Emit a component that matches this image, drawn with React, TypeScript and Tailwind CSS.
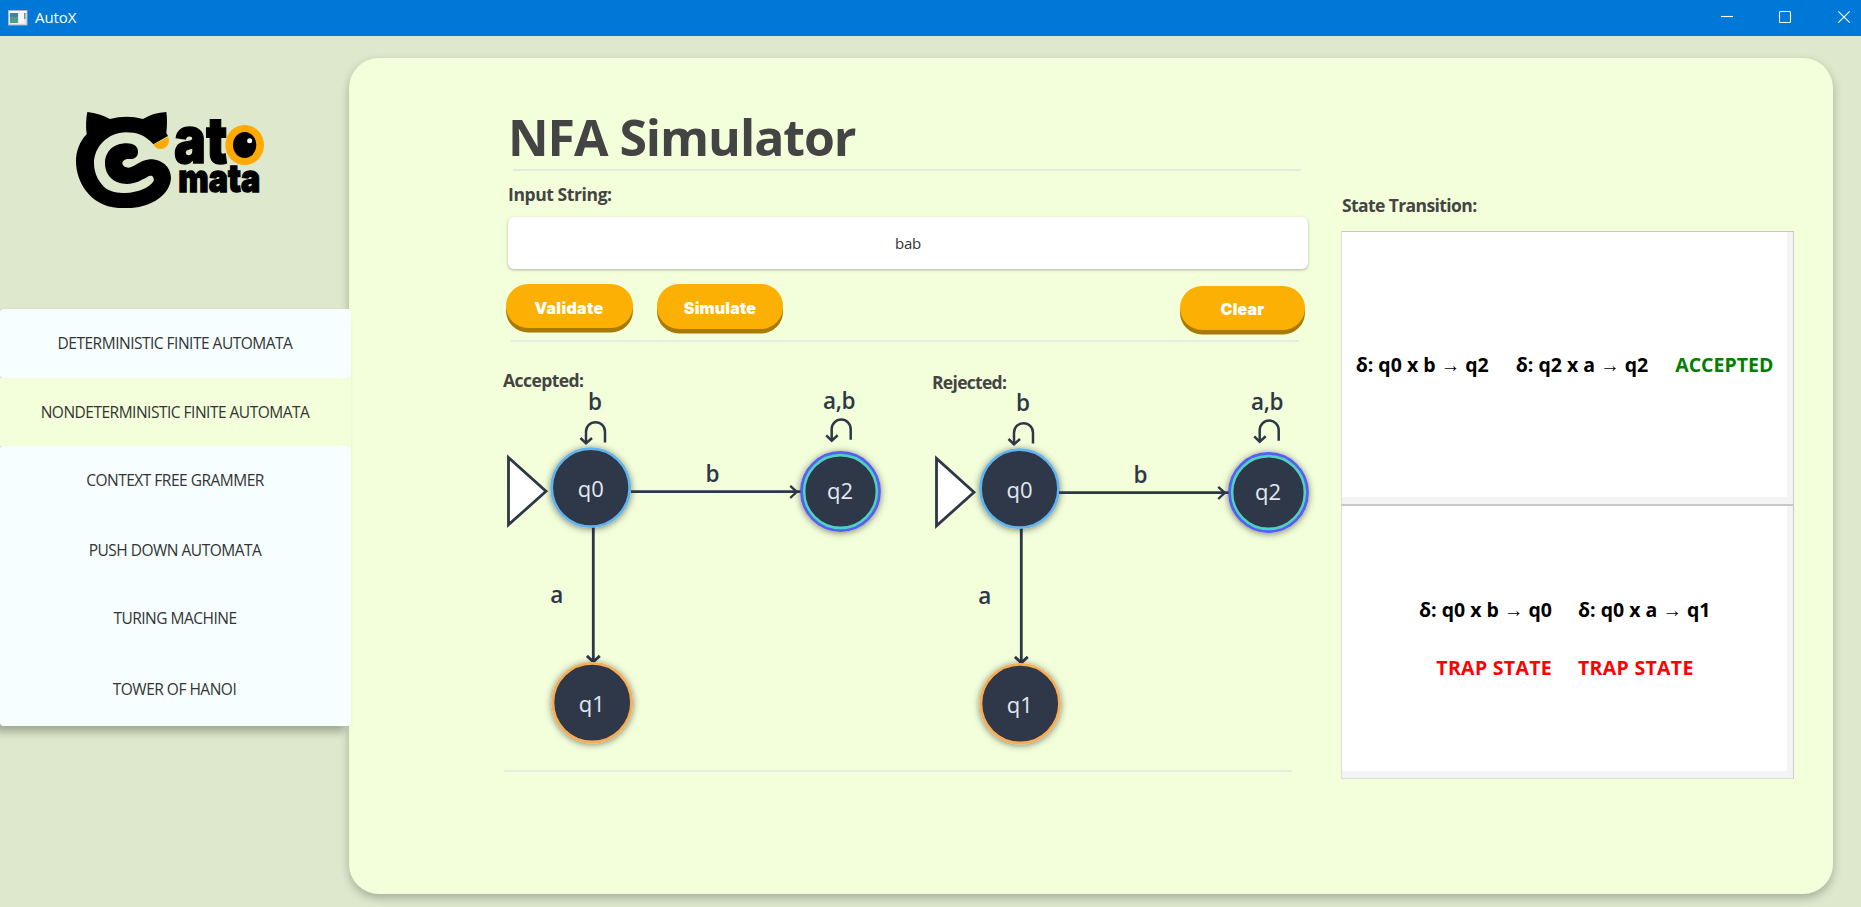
import type { ReactNode } from "react";

const INK = "#2d3748";

function TitleBar() {
  return (
    <header className="flex h-9 shrink-0 items-center bg-[#0078d7] pl-2 text-white">
      <svg width="20" height="17" viewBox="0 0 20 17">
        <rect x="0.5" y="0.5" width="18.5" height="14.5" fill="#e9eaec" stroke="#a9b6c4" />
        <rect x="1" y="1" width="17.5" height="2" fill="#f7f7f7" />
        <rect x="2" y="3" width="8" height="10" fill="#4f9c8c" />
        <rect x="2" y="3" width="8" height="4" fill="#4580a0" />
        <rect x="11" y="3" width="5" height="10" fill="#f7f8fa" />
        <rect x="16" y="3" width="1.5" height="6" fill="#58a58c" />
      </svg>
      <span className="mb-[2px] ml-[7px] text-[15px] leading-5 tracking-[-0.1px]">AutoX</span>
      <svg className="ml-auto" width="140" height="36" viewBox="0 0 140 36" fill="none" stroke="#fff" strokeWidth="1.1">
        <path d="M0 16.5h12" />
        <rect x="58.5" y="11.5" width="11" height="11" rx="1" />
        <path d="M117.3 11.3l11.4 11.4M128.7 11.3l-11.4 11.4" />
      </svg>
    </header>
  );
}

function Logo() {
  return (
    <svg className="ml-[70px] mt-16 shrink-0 overflow-visible" width="210" height="120" viewBox="0 0 630 360">
      <path d="M52 36Q90 40 120 57Q170 44 219 57Q250 38 289 36Q293 62 289 99L294 108L250 133C225 105 200 97 168 97C115 97 72 140 72 190C72 225 90 250 105 263C120 275 145 279 165 279C205 278 240 262 251 243C254 230 243 223 232 231C215 240 195 252 171 252C130 252 105 225 105 190C105 155 130 130 170 130C190 130 204 138 204 155C204 170 195 177 180 177C165 176 157 182 157 190C158 200 168 203 175 203C195 202 205 182 240 178C275 178 303 200 303 235C300 285 245 320 185 324L145 324C100 320 70 300 50 275C30 250 18 215 18 185C18 155 28 125 50 103C47 80 48 55 52 36Z" />
      <path d="M250 134L294 111C300 120 298 145 272 147C262 147 256 142 250 134Z" fill="#ffaa00" />
      <g fontFamily="Inter, sans-serif" fontWeight="900" stroke="#000" strokeWidth="4">
        <text x="312" y="190" fontSize="194" textLength="160" lengthAdjust="spacingAndGlyphs">at</text>
        <text x="325" y="276.5" fontSize="117" textLength="246" lengthAdjust="spacingAndGlyphs">mata</text>
      </g>
      <ellipse cx="524" cy="135" rx="58" ry="60" fill="#ffaa00" />
      <ellipse cx="524" cy="135" rx="35" ry="39" />
      <circle cx="539" cy="122" r="7.5" fill="#fff" />
    </svg>
  );
}

function MenuItem({ children, className }: { children: ReactNode; className: string }) {
  return (
    <button className={`flex w-full items-center justify-center text-[15.5px] tracking-[-0.5px] text-[#333] ${className}`}>
      {children}
    </button>
  );
}

function Sidebar() {
  return (
    <aside className="relative z-10 flex w-[349px] shrink-0 flex-col">
      <Logo />
      <nav className="mt-[89px] flex w-[351px] flex-col rounded-[4px] shadow-[-6px_6px_8px_rgba(0,0,0,0.28)]">
        <MenuItem className="h-[69px] rounded-[4px] bg-[#f6feff] pr-px">DETERMINISTIC FINITE AUTOMATA</MenuItem>
        <MenuItem className="h-[68px] bg-[#f3ffdb] pt-[2px] pr-px">NONDETERMINISTIC FINITE AUTOMATA</MenuItem>
        <MenuItem className="h-[69px] rounded-t-[4px] bg-[#f6feff] pr-px">CONTEXT FREE GRAMMER</MenuItem>
        <MenuItem className="h-[69px] bg-[#f6feff] pt-[2px] pr-px">PUSH DOWN AUTOMATA</MenuItem>
        <MenuItem className="h-[69px] bg-[#f6feff] pr-px">TURING MACHINE</MenuItem>
        <MenuItem className="h-[73px] rounded-b-[4px] bg-[#f6feff] pr-[2px]">TOWER OF HANOI</MenuItem>
      </nav>
    </aside>
  );
}

function Label({ children, className }: { children: ReactNode; className: string }) {
  return (
    <h2 className={`text-[17.5px] leading-6 font-bold whitespace-nowrap text-[#444] ${className}`}>{children}</h2>
  );
}

function Pill({ children, className }: { children: ReactNode; className: string }) {
  return (
    <button
      className={`flex items-center justify-center rounded-[22px] bg-[#fbb003] font-['Inter',sans-serif] text-base font-black text-white shadow-[0_4.5px_0_#a87a04] ${className}`}
    >
      {children}
    </button>
  );
}

function Loop({ x, y }: { x: number; y: number }) {
  return (
    <g transform={`translate(${x} ${y})`} fill="none" stroke={INK} strokeWidth="2.5">
      <path d="M19 19.8V9A9.5 9.5 0 0 0 0 9V20.5" />
      <path d="M-5.5 15.3L0 20.7L6 15.3" />
    </g>
  );
}

function Automaton({ q0x }: { q0x: number }) {
  return (
    <svg className="block overflow-visible" width="400" height="365" viewBox="0 0 400 365" textAnchor="middle">
      <defs>
        <filter id="node-shadow" x="-30%" y="-30%" width="160%" height="160%">
          <feDropShadow dx="0" dy="1" stdDeviation="3.8" floodColor="#000" floodOpacity="0.5" />
        </filter>
      </defs>
      <path d="M8.5 67.5V134.8L46 101.3Z" fill="#fff" stroke={INK} strokeWidth="2.8" />
      <path d="M93.3 136V272M86.9 265.9L93.3 271.8L99.8 265.9" fill="none" stroke={INK} strokeWidth="2.8" />
      <g filter="url(#node-shadow)">
        <circle cx={q0x} cy="97.7" r="39" fill={INK} stroke="#63b3ed" strokeWidth="2.8" />
      </g>
      <g filter="url(#node-shadow)">
        <circle cx="92.2" cy="312.6" r="39.3" fill={INK} stroke="#f6ad55" strokeWidth="2.8" />
      </g>
      <g filter="url(#node-shadow)">
        <circle cx="340.5" cy="101.5" r="39" fill={INK} stroke="#5a5cf5" strokeWidth="2.8" />
        <circle cx="340.5" cy="101.5" r="36.4" fill="none" stroke="#4fd1c5" strokeWidth="2.6" />
      </g>
      <path d="M131 101.7H300.5" stroke={INK} strokeWidth="2.7" />
      <path d="M290.2 95.8L296.8 101.8L290.2 108" fill="none" stroke={INK} strokeWidth="2.4" />
      <Loop x={86} y={32.7} />
      <Loop x={331.7} y={30} />
      <g fill={INK} fontSize="22.5" fontWeight="600">
        <text x="95" y="20.3">b</text>
        <text x="339.3" y="19" textLength="32.5">a,b</text>
        <text x="212.5" y="92">b</text>
        <text x="56.7" y="213">a</text>
      </g>
      <g fill="#e2e8f0" fontSize="22" fontWeight="400">
        <text x={q0x} y="107.2">q0</text>
        <text x="340" y="108.8">q2</text>
        <text x="91.8" y="322.4">q1</text>
      </g>
    </svg>
  );
}

function Simulator() {
  return (
    <section className="box-content flex w-[832px] shrink-0 flex-col pt-[49px] pl-[151px]">
      <h1 className="ml-[8px] text-[50px] leading-[60px] font-bold tracking-[-1.05px] text-[#444]">NFA Simulator</h1>
      <div className="mt-[2px] ml-[13px] h-[2px] w-[788px] bg-[#e5eadd]" />
      <Label className="mt-[11px] ml-[8px] tracking-[-0.4px]">Input String:</Label>
      <div className="mt-[11px] ml-2 flex h-[52px] w-[800px] items-center justify-center rounded-[6px] bg-white text-[15px] tracking-[-0.3px] text-[#333] shadow-[0_1px_3px_rgba(0,0,0,0.3)]">
        bab
      </div>
      <div className="mt-[15px] ml-[6px] flex h-14 items-start">
        <Pill className="h-11 w-[127px] pt-1 pr-px tracking-[0.3px]">Validate</Pill>
        <Pill className="ml-6 h-[45px] w-[126px] pt-[3px] tracking-[0.15px]">Simulate</Pill>
        <Pill className="mt-[2px] ml-[397px] h-11 w-[125px] pt-[1px] tracking-[0.15px]">Clear</Pill>
      </div>
      <div className="ml-[11px] h-[2px] w-[788px] bg-[#e8ece0]" />
      <div className="mt-[26px] flex h-[402px]">
        <div className="w-[428px]">
          <Label className="ml-[3px] h-[22px] tracking-[-0.55px]">Accepted:</Label>
          <Automaton q0x={90.7} />
        </div>
        <div className="pt-[2px]">
          <Label className="ml-[4px] h-[21px] tracking-[-0.7px]">Rejected:</Label>
          <Automaton q0x={91.5} />
        </div>
      </div>
      <div className="ml-[4px] h-[2px] w-[788px] bg-[#e8ece0]" />
    </section>
  );
}

function Cell({ children, className }: { children: ReactNode; className: string }) {
  return (
    <div className={`border-t border-r border-l border-[#c8c8c8] border-l-[#dcdcdc] bg-[#f4f4f4] pr-[6px] ${className}`}>
      <div className="flex h-full items-center justify-center bg-white text-[19.5px] font-bold whitespace-nowrap text-black">
        {children}
      </div>
    </div>
  );
}

function Transitions() {
  return (
    <section className="mt-[135px] ml-[9px] w-[453px]">
      <Label className="ml-px tracking-[-0.6px]">State Transition:</Label>
      <div className="mt-[14px] border-b border-[#dcdfd2]">
        <Cell className="h-[273px] pb-[7px]">
          <p className="flex gap-[27px]">
            <span>δ: q0 x b → q2</span>
            <span>δ: q2 x a → q2</span>
            <span className="text-[#008000]">ACCEPTED</span>
          </p>
        </Cell>
        <Cell className="h-[274px] border-t-2 pb-[7px]">
          <div className="grid grid-cols-2 gap-x-[26px] pl-px leading-[58px]">
            <span className="text-right">δ: q0 x b → q0</span>
            <span>δ: q0 x a → q1</span>
            <span className="text-right tracking-[0.3px] text-[#ff0000]">TRAP STATE</span>
            <span className="tracking-[0.3px] text-[#ff0000]">TRAP STATE</span>
          </div>
        </Cell>
      </div>
    </section>
  );
}

export default function App() {
  return (
    <div className="flex h-[907px] w-[1861px] flex-col overflow-hidden bg-[#dee8cc] font-['Open_Sans','Noto_Sans',sans-serif]">
      <TitleBar />
      <div className="flex flex-1">
        <Sidebar />
        <main className="mt-[22px] flex h-[836px] w-[1484px] items-start rounded-[30px] bg-[#f3ffdb] shadow-[0_4px_10px_rgba(0,0,0,0.25)]">
          <Simulator />
          <Transitions />
        </main>
      </div>
    </div>
  );
}
